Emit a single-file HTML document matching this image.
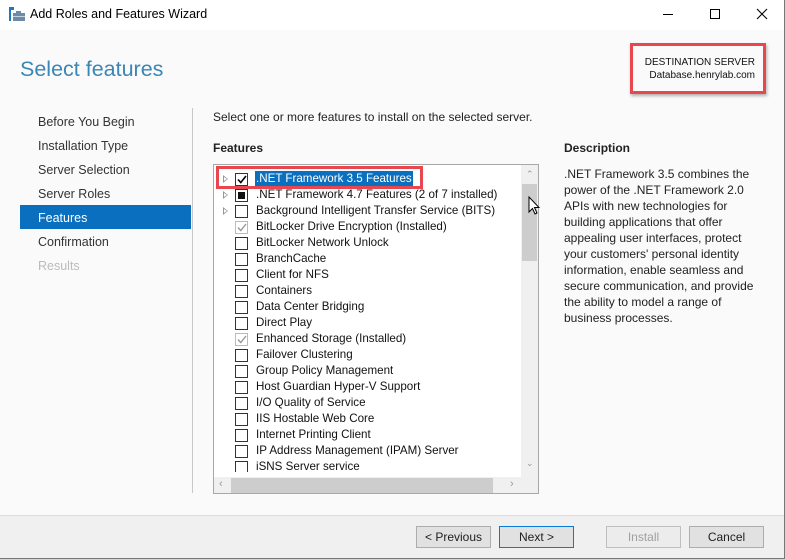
<!DOCTYPE html>
<html><head><style>
*{margin:0;padding:0;box-sizing:border-box}
body{width:785px;height:559px;position:relative;overflow:hidden;background:#fafafa;font-family:"Liberation Sans",sans-serif;font-size:12px;color:#1e1e1e}
.a{position:absolute;white-space:nowrap}
.nav{position:absolute;left:38px;font-size:12.5px;color:#333}
.row{position:absolute;left:235px;height:16px;width:290px}
.cb{position:absolute;left:0;top:2px;width:13px;height:13px;border:1px solid #333;background:#fff}
.row span.t{position:absolute;left:21px;top:0;font-size:11.6px;line-height:16px;color:#111}
.exp{position:absolute;left:-12px;top:4px;width:0;height:0;border-left:5px solid #999;border-top:4px solid transparent;border-bottom:4px solid transparent}
.exp:after{content:"";position:absolute;left:-4px;top:-2px;border-left:3px solid #fff;border-top:2px solid transparent;border-bottom:2px solid transparent}
.btn{position:absolute;top:526px;height:22px;border:1px solid #adadad;background:#e1e1e1;text-align:center;line-height:20px;font-size:12px}
.desc{position:absolute;left:564px;top:166px;font-size:12px;line-height:16px;color:#222}
</style></head><body>
<div class="a" style="left:0;top:0;width:785px;height:30px;background:#fff"></div>
<svg class="a" style="left:9px;top:7px" width="16" height="15"><rect x="0" y="0" width="5" height="3" fill="#1a78c8"/><rect x="0" y="3" width="2" height="11" fill="#1a78c8"/><rect x="4" y="6" width="12" height="8" fill="#6d8aa6"/><rect x="7" y="4" width="5" height="2" fill="#6d8aa6"/><rect x="4" y="9" width="12" height="1" fill="#c7d3df"/></svg>
<div class="a" style="left:30px;top:7px;font-size:12.5px;color:#000">Add Roles and Features Wizard</div>
<div class="a" style="left:663px;top:14px;width:10px;height:1px;background:#000"></div>
<div class="a" style="left:710px;top:9px;width:10px;height:10px;border:1px solid #000"></div>
<svg class="a" style="left:756px;top:8px" width="12" height="12"><path d="M1 1L11 11M11 1L1 11" stroke="#000" stroke-width="1.1"/></svg>
<div class="a" style="left:20px;top:57px;font-size:21.5px;color:#3a86b6">Select features</div>
<div class="a" style="left:630px;top:43px;width:136px;height:51px;border:3px solid #e8474f;box-shadow:1px 2px 3px rgba(0,0,0,.3)"></div>
<div class="a" style="left:600px;top:56px;font-size:10px;color:#111;text-align:right;width:155px;line-height:13px">DESTINATION SERVER<br>Database.henrylab.com</div>

<div class="nav" style="top:115px">Before You Begin</div>
<div class="nav" style="top:139px">Installation Type</div>
<div class="nav" style="top:163px">Server Selection</div>
<div class="nav" style="top:187px">Server Roles</div>
<div class="a" style="left:20px;top:205px;width:171px;height:24px;background:#0a6fbe"></div>
<div class="nav" style="top:211px;color:#fff">Features</div>
<div class="nav" style="top:235px">Confirmation</div>
<div class="nav" style="top:259px;color:#bbb">Results</div>
<div class="a" style="left:192px;top:108px;width:1px;height:385px;background:#c8c8c8"></div>

<div class="a" style="left:213px;top:110px;font-size:12px;color:#222">Select one or more features to install on the selected server.</div>
<div class="a" style="left:213px;top:141px;font-size:12px;font-weight:bold;color:#222">Features</div>
<div class="a" style="left:564px;top:141px;font-size:12px;font-weight:bold;color:#222">Description</div>

<div class="a" style="left:213px;top:164px;width:326px;height:330px;border:1px solid #a8a8a8;background:#fff;overflow:hidden">
<div class="a" style="left:307px;top:0;width:17px;height:312px;background:#f0f0f0"></div>
<div class="a" style="left:308px;top:19px;width:15px;height:77px;background:#cdcdcd"></div>
<div class="a" style="left:312px;top:4px;font-size:9px;color:#999">&#8963;</div>
<div class="a" style="left:312px;top:293px;font-size:9px;color:#999">&#8964;</div>
<div class="a" style="left:0;top:312px;width:324px;height:17px;background:#f0f0f0"></div>
<div class="a" style="left:17px;top:313px;width:262px;height:15px;background:#cdcdcd"></div>
<div class="a" style="left:5px;top:313px;font-size:11px;color:#999">&lsaquo;</div>
<div class="a" style="left:296px;top:313px;font-size:11px;color:#999">&rsaquo;</div>
</div>

<div class="row" style="top:171px"><i class="exp"></i><div class="cb"></div><svg class="a" style="left:2px;top:4px" width="10" height="9"><path d="M1 4.5L3.8 7.5L9 1" stroke="#000" stroke-width="1.6" fill="none"/></svg><span class="t" style="background:#0a6fbe;color:#fff;padding:0 1px;left:20px">.NET Framework 3.5 Features</span></div>
<div class="a" style="left:216px;top:166px;width:207px;height:23px;border:3px solid #e8474f"></div>
<div class="row" style="top:187px"><i class="exp"></i><div class="cb"></div><div class="a" style="left:3px;top:5px;width:7px;height:7px;background:#111"></div><span class="t">.NET Framework 4.7 Features (2 of 7 installed)</span></div>
<div class="row" style="top:203px"><i class="exp"></i><div class="cb"></div><span class="t">Background Intelligent Transfer Service (BITS)</span></div>
<div class="row" style="top:219px"><div class="cb" style="border-color:#bbb"></div><svg class="a" style="left:2px;top:4px" width="10" height="9"><path d="M1 4.5L3.8 7.5L9 1" stroke="#999" stroke-width="1.4" fill="none"/></svg><span class="t">BitLocker Drive Encryption (Installed)</span></div>
<div class="row" style="top:235px"><div class="cb"></div><span class="t">BitLocker Network Unlock</span></div>
<div class="row" style="top:251px"><div class="cb"></div><span class="t">BranchCache</span></div>
<div class="row" style="top:267px"><div class="cb"></div><span class="t">Client for NFS</span></div>
<div class="row" style="top:283px"><div class="cb"></div><span class="t">Containers</span></div>
<div class="row" style="top:299px"><div class="cb"></div><span class="t">Data Center Bridging</span></div>
<div class="row" style="top:315px"><div class="cb"></div><span class="t">Direct Play</span></div>
<div class="row" style="top:331px"><div class="cb" style="border-color:#bbb"></div><svg class="a" style="left:2px;top:4px" width="10" height="9"><path d="M1 4.5L3.8 7.5L9 1" stroke="#999" stroke-width="1.4" fill="none"/></svg><span class="t">Enhanced Storage (Installed)</span></div>
<div class="row" style="top:347px"><div class="cb"></div><span class="t">Failover Clustering</span></div>
<div class="row" style="top:363px"><div class="cb"></div><span class="t">Group Policy Management</span></div>
<div class="row" style="top:379px"><div class="cb"></div><span class="t">Host Guardian Hyper-V Support</span></div>
<div class="row" style="top:395px"><div class="cb"></div><span class="t">I/O Quality of Service</span></div>
<div class="row" style="top:411px"><div class="cb"></div><span class="t">IIS Hostable Web Core</span></div>
<div class="row" style="top:427px"><div class="cb"></div><span class="t">Internet Printing Client</span></div>
<div class="row" style="top:443px"><div class="cb"></div><span class="t">IP Address Management (IPAM) Server</span></div>
<div class="row" style="top:459px;height:13px;overflow:hidden"><div class="cb"></div><span class="t">iSNS Server service</span></div>

<svg class="a" style="left:528px;top:196px" width="12" height="19"><path d="M1 1L1 16L4.5 12.5L7 18L9 17L6.5 11.5L11 11.5Z" fill="#fff" stroke="#000" stroke-width="1"/></svg>

<div class="desc">.NET Framework 3.5 combines the<br>power of the .NET Framework 2.0<br>APIs with new technologies for<br>building applications that offer<br>appealing user interfaces, protect<br>your customers' personal identity<br>information, enable seamless and<br>secure communication, and provide<br>the ability to model a range of<br>business processes.</div>

<div class="a" style="left:0;top:515px;width:785px;height:44px;background:#f0f0f0;border-top:1px solid #dcdcdc"></div>
<div class="btn" style="left:416px;width:75px">&lt; Previous</div>
<div class="btn" style="left:499px;width:75px;border-color:#0a78d7">Next &gt;</div>
<div class="btn" style="left:606px;width:75px;border-color:#bfbfbf;background:#ececec;color:#a0a0a0">Install</div>
<div class="btn" style="left:689px;width:75px">Cancel</div>
<div class="a" style="left:784px;top:0;width:1px;height:559px;background:#777"></div>
<div class="a" style="left:0;top:558px;width:785px;height:1px;background:#777"></div>
</body></html>
